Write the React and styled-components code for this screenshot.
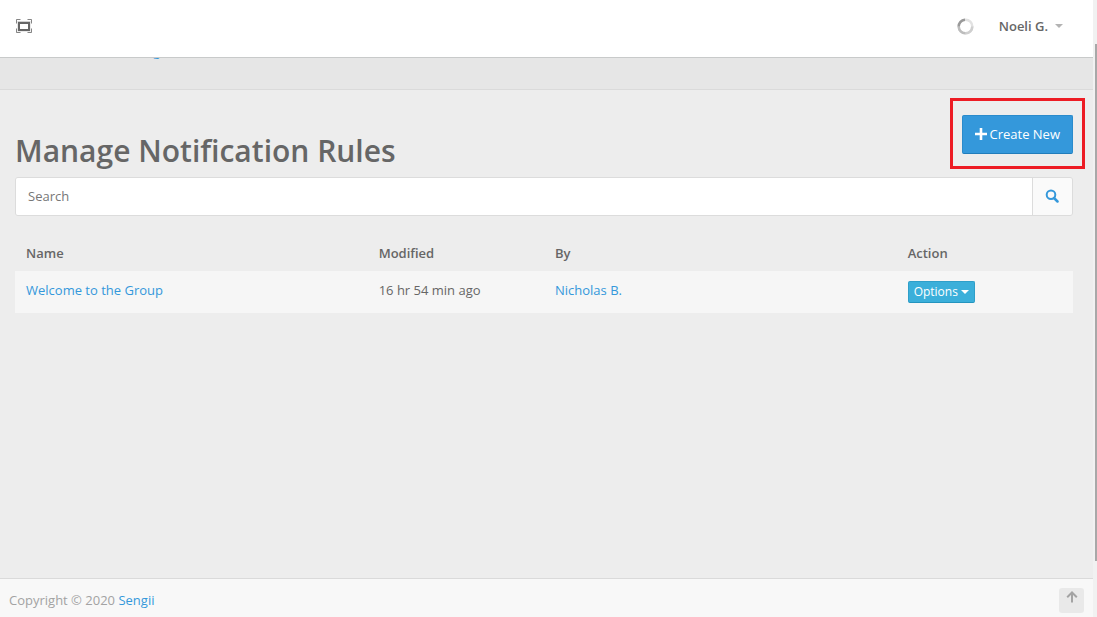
import React from "react";
import styled, { createGlobalStyle } from "styled-components";

const GlobalStyle = createGlobalStyle`
  *, *::before, *::after { box-sizing: border-box; }
  body {
    margin: 0;
    background: #ededed;
    color: #666;
    font: 13px/20px "Open Sans", "Noto Sans", sans-serif;
  }
  button, input { font: inherit; }
`;

const Shell = styled.div`
  display: flex;
  min-height: 100vh;
`;

const Page = styled.div`
  flex: 1;
  min-width: 0;
  display: flex;
  flex-direction: column;
`;

const ScrollTrack = styled.div`
  width: 4px;
  padding: 44px 0 56px 2px;
  background: #f1f1f1;
  display: flex;
`;

const ScrollThumb = styled.div`
  flex: 1;
  background: #a8a8a8;
`;

const TopBar = styled.header`
  height: 58px;
  padding: 0 30px 5px 16px;
  display: flex;
  align-items: center;
  justify-content: space-between;
  background: #fff;
  border-bottom: 1px solid #c8caca;
`;

const TopRight = styled.div`
  display: flex;
  align-items: center;
  gap: 25px;
`;

const IconButton = styled.button`
  display: flex;
  padding: 0;
  border: 0;
  background: none;
  color: #666;
`;

const UserMenu = styled.button`
  display: flex;
  align-items: center;
  gap: 7px;
  padding: 0;
  border: 0;
  background: none;
  color: #666;
  font-weight: 600;
`;

const Caret = styled.span`
  border: 4px solid transparent;
  border-top-color: ${(p) => p.$color};
  border-bottom: 0;
`;

const Breadcrumb = styled.nav`
  height: 32px;
  overflow: hidden;
  background: #e6e6e6;
  border-bottom: 1px solid #dadada;
  padding-left: 153px;

  a { display: block; margin-top: -17px; }
`;

const Link = styled.a`
  color: #3498db;
  text-decoration: none;
`;

const Main = styled.main`
  flex: 1;
  padding: 25px 20px 0 15px;
`;

const TitleRow = styled.div`
  display: flex;
  justify-content: space-between;
  align-items: flex-start;
  height: 62px;
`;

const Title = styled.h1`
  margin: 16px 0 0;
  font-size: 30px;
  line-height: 40px;
  font-weight: 600;
`;

const Highlight = styled.div`
  position: relative;

  &::after {
    content: "";
    position: absolute;
    inset: -17px -12px -15px;
    border: 3px solid #ed1c24;
    pointer-events: none;
  }
`;

const CreateButton = styled.button`
  display: flex;
  align-items: center;
  gap: 3px;
  height: 39px;
  padding: 0 12px 2px;
  color: #fff;
  background: #3498db;
  border: 1px solid #2a8bcc;
  border-bottom-color: #217dbb;
  border-radius: 2px;
`;

const SearchForm = styled.form`
  display: flex;
  height: 39px;
  border: 1px solid #dcdcdc;
  border-radius: 3px;
  overflow: hidden;
`;

const SearchInput = styled.input`
  flex: 1;
  min-width: 0;
  padding: 0 12px 2px;
  border: 0;
  background: #fff;
  color: #666;

  &::placeholder { color: #777; opacity: 1; }
`;

const SearchButton = styled.button`
  width: 40px;
  display: flex;
  align-items: center;
  justify-content: center;
  padding: 0 1px 1px 0;
  border: 0;
  border-left: 1px solid #dcdcdc;
  background: #fafafa;
  color: #3498db;
`;

const RulesTable = styled.table`
  width: 100%;
  margin-top: 17px;
  table-layout: fixed;
  border-collapse: collapse;
  text-align: left;

  th { height: 38px; padding: 2px 11px 0; font-weight: 600; }
  td { height: 42px; padding: 9px 11px; vertical-align: top; background: #f6f6f6; }
`;

const Column = styled.col`
  width: ${(p) => p.$share};
`;

const OptionsButton = styled.button`
  display: flex;
  align-items: center;
  gap: 3px;
  height: 22px;
  margin-top: 1px;
  padding: 0 5px;
  font-size: 12px;
  color: #fff;
  background: #3bafda;
  border: 1px solid #2f9fc9;
  border-bottom-color: #2494be;
  border-radius: 2px;
`;

const Footer = styled.footer`
  display: flex;
  align-items: center;
  justify-content: space-between;
  height: 39px;
  padding: 4px 9px 0;
  background: #f8f8f8;
  border-top: 1px solid #dadada;
  color: #a3a3a3;
`;

const TopButton = styled.button`
  display: flex;
  justify-content: center;
  width: 25px;
  height: 25px;
  padding: 3px 0 0;
  border: 0;
  border-radius: 3px;
  background: #e9e9e9;
  color: #a3a3a3;
`;

const FullscreenIcon = () => (
  <svg width="16" height="14" viewBox="0 0 16 14" fill="none" stroke="currentColor">
    <path d="M.5 4.500V.5H4.500M11.500.5H15.500V4.500M15.500 9.500V13.500H11.500M4.500 13.500H.5V9.500" strokeWidth="1" opacity="0.8" />
    <rect x="3" y="4" width="10" height="7" strokeWidth="2" />
    <rect x="2" y="2.500" width="12" height="9.500" opacity="0.3" />
  </svg>
);

const SpinnerIcon = () => (
  <svg width="17" height="17" viewBox="0 0 17 17" fill="none" strokeWidth="2.500">
    <circle cx="8.500" cy="8.500" r="6.800" stroke="#e2e2e2" />
    <path d="M15.300 8.500A6.800 6.800 0 0 1 8.500 15.300" stroke="#cfcfcf" />
    <path d="M8.500 15.300A6.800 6.800 0 0 1 1.700 8.500" stroke="#bdbdbd" />
    <path d="M1.700 8.500A6.800 6.800 0 0 1 8 1.700" stroke="#999" />
  </svg>
);

const PlusIcon = () => (
  <svg width="12" height="12" viewBox="0 0 12 12" fill="currentColor">
    <path d="M4.700 0h2.600v4.700H12v2.600H7.300V12H4.700V7.300H0V4.700h4.700z" />
  </svg>
);

const SearchIcon = () => (
  <svg width="14" height="14" viewBox="0 0 14 14" fill="none" stroke="currentColor">
    <circle cx="6" cy="5.800" r="4.300" strokeWidth="2" />
    <path d="M9 9l3.500 3.500" strokeWidth="2.500" strokeLinecap="round" />
  </svg>
);

const ArrowUpIcon = () => (
  <svg width="12" height="12" viewBox="0 0 12 12" fill="none" stroke="currentColor" strokeWidth="2">
    <path d="M6 11.500V1.500M1.200 6.200L6 1.500l4.800 4.700" />
  </svg>
);

const rules = [
  { name: "Welcome to the Group", modified: "16 hr 54 min ago", by: "Nicholas B." },
];

export default function App() {
  return (
    <>
      <GlobalStyle />
      <Shell>
        <Page>
          <TopBar>
            <IconButton type="button" aria-label="Fullscreen">
              <FullscreenIcon />
            </IconButton>
            <TopRight>
              <SpinnerIcon />
              <UserMenu type="button">
                Noeli G.
                <Caret $color="#b3b3b3" />
              </UserMenu>
            </TopRight>
          </TopBar>
          <Breadcrumb>
            <Link href="#">g</Link>
          </Breadcrumb>
          <Main>
            <TitleRow>
              <Title>Manage Notification Rules</Title>
              <Highlight>
                <CreateButton type="button">
                  <PlusIcon />
                  Create New
                </CreateButton>
              </Highlight>
            </TitleRow>
            <SearchForm>
              <SearchInput type="text" placeholder="Search" aria-label="Search" />
              <SearchButton type="button" aria-label="Submit search">
                <SearchIcon />
              </SearchButton>
            </SearchForm>
            <RulesTable>
              <colgroup>
                <Column $share="33.333%" />
                <Column $share="16.667%" />
                <Column $share="33.333%" />
                <Column $share="16.667%" />
              </colgroup>
              <thead>
                <tr>
                  <th>Name</th>
                  <th>Modified</th>
                  <th>By</th>
                  <th>Action</th>
                </tr>
              </thead>
              <tbody>
                {rules.map((rule) => (
                  <tr key={rule.name}>
                    <td><Link href="#">{rule.name}</Link></td>
                    <td>{rule.modified}</td>
                    <td><Link href="#">{rule.by}</Link></td>
                    <td>
                      <OptionsButton type="button">
                        Options
                        <Caret $color="#fff" />
                      </OptionsButton>
                    </td>
                  </tr>
                ))}
              </tbody>
            </RulesTable>
          </Main>
          <Footer>
            <span>Copyright © 2020 <Link href="#">Sengii</Link></span>
            <TopButton type="button" aria-label="Back to top">
              <ArrowUpIcon />
            </TopButton>
          </Footer>
        </Page>
        <ScrollTrack>
          <ScrollThumb />
        </ScrollTrack>
      </Shell>
    </>
  );
}
